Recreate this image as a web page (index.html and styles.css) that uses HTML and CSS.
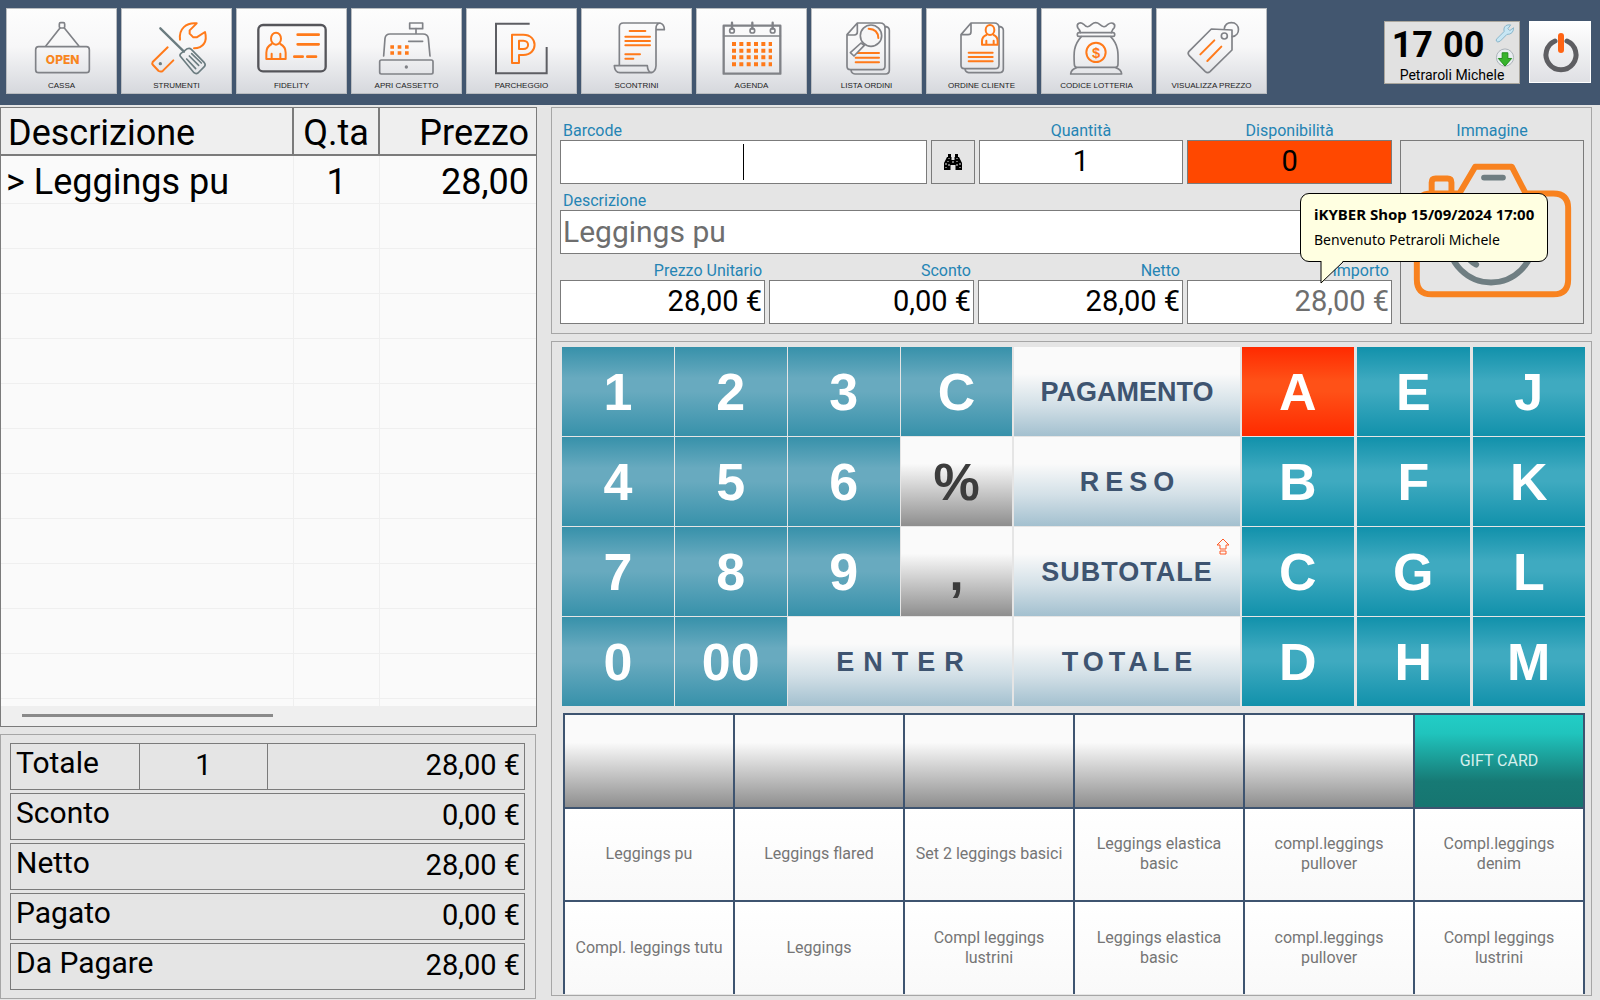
FILE: index.html
```html
<!DOCTYPE html>
<html lang="it">
<head>
<meta charset="utf-8">
<title>iKYBER Shop</title>
<meta name="viewport" content="width=device-width, initial-scale=1">
<link rel="stylesheet" href="styles.css">
</head>
<body>
<header class="topbar">
  <nav class="tools" aria-label="Funzioni">
    <button class="tool" type="button">
      <svg class="tool-icon" viewBox="18 24 333 216" aria-hidden="true">
        <g class="gray"><rect x="178" y="65" width="16" height="16" rx="4"/><path d="M180 81 138 134M193 81 236 134"/><rect x="107" y="137" width="161" height="78" rx="9"/></g>
        <text class="open-text" x="188" y="190">OPEN</text>
      </svg>
      <span>CASSA</span>
    </button>
    <button class="tool" type="button">
      <svg class="tool-icon" viewBox="363 24 333 216" aria-hidden="true">
        <g class="slate"><path class="thick" d="M481 82 552 152"/><path d="M541 166Q538 161 543 157L562 143Q569 140 574 145L613 185Q618 191 613 197L594 216Q588 220 582 215Z"/><path d="M560 174 587 203M568 165 596 193M575 158 604 186"/><circle class="slate-dot" cx="481" cy="188" r="5"/></g>
        <g class="orange"><path d="M540 116C536 84 558 64 590 67L569 88V98L580 109H590L615 93C623 121 610 142 582 142"/><path d="M503 139 458 183Q455 188 459 192L476 210Q483 214 489 209L520 178"/></g>
      </svg>
      <span>STRUMENTI</span>
    </button>
    <button class="tool" type="button">
      <svg class="tool-icon" viewBox="708 24 333 216" aria-hidden="true">
        <rect class="card" x="775" y="72" width="202" height="139" rx="14"/>
        <g class="orange heavy"><path d="M893 101H956M893 130H956M883 167H908M922 167H948"/></g>
        <g class="orange"><ellipse cx="828" cy="113" rx="15" ry="18"/><path d="M815 129Q799 137 799 155V174H857V155Q857 137 841 129M815 174V158M841 174V158"/></g>
      </svg>
      <span>FIDELITY</span>
    </button>
    <button class="tool" type="button">
      <svg class="tool-icon" viewBox="33 24 333 216" aria-hidden="true">
        <g class="gray"><rect x="209" y="66" width="39" height="17"/><path d="M228 83V98M131 165 135 112Q137 99 150 99H249Q263 99 265 112L270 165M206 121H248"/><rect x="119" y="177" width="160" height="42" rx="5"/><circle class="gray-dot" cx="199" cy="198" r="5"/></g>
        <path class="dots" d="M151 138H206M151 156H206"/>
      </svg>
      <span>APRI CASSETTO</span>
    </button>
    <button class="tool" type="button">
      <svg class="tool-icon" viewBox="378 24 333 216" aria-hidden="true">
        <path class="dark-line" d="M569 68H468V217H620V138"/>
        <g class="orange"><path d="M516 101H550C595 101 595 162 550 162H537V186H516ZM537 119V144H550C569 144 569 119 550 119Z"/></g>
      </svg>
      <span>PARCHEGGIO</span>
    </button>
    <button class="tool" type="button">
      <svg class="tool-icon" viewBox="723 24 333 216" aria-hidden="true">
        <g class="gray"><path d="M838 193V78Q838 66 850 66H960Q973 69 973 86H948M960 66Q948 68 948 82V194Q947 214 931 215H840Q824 214 823 194H922Q923 214 936 215"/></g>
        <g class="orange"><path d="M869 90H916M856 107H930M856 120H930M856 133H930M856 160H900M856 173H880"/></g>
      </svg>
      <span>SCONTRINI</span>
    </button>
    <button class="tool" type="button">
      <svg class="tool-icon" viewBox="48 24 333 216" aria-hidden="true">
        <g class="gray"><rect class="thick" x="131" y="74" width="170" height="144"/><path d="M131 105H301"/><circle cx="156" cy="89" r="7"/><circle cx="217" cy="89" r="7"/><circle cx="278" cy="89" r="7"/><path class="thick" d="M156 65V83M217 65V83M278 65V83"/></g>
        <path class="squares" d="M156 129H276M156 149H276M156 169H276M156 190H276"/>
      </svg>
      <span>AGENDA</span>
    </button>
    <button class="tool" type="button">
      <svg class="tool-icon" viewBox="393 24 333 216" aria-hidden="true">
        <g class="gray"><path d="M532 66H600Q615 66 615 80V195Q615 206 604 206H511Q501 206 501 196V101ZM532 66V93Q532 102 523 102H501M615 76Q628 78 628 88V208Q628 219 616 219H525Q514 218 513 207"/></g>
        <path class="orange" d="M527 156H597M527 170H597M527 184H597"/>
        <g class="gray lens"><path d="M543 126 511 155 522 165 553 133Z"/><circle cx="573" cy="104" r="32"/></g>
        <path class="orange" d="M566 83Q594 84 595 111"/>
      </svg>
      <span>LISTA ORDINI</span>
    </button>
    <button class="tool" type="button">
      <svg class="tool-icon" viewBox="738 24 333 216" aria-hidden="true">
        <g class="gray"><path d="M873 66H942Q957 66 957 80V191Q957 203 945 203H853Q843 203 843 193V101ZM873 66V92Q873 101 864 101H843M957 76Q970 78 970 88V204Q970 215 957 215H866Q856 214 855 204"/></g>
        <g class="orange"><path d="M866 155H938M866 168H938M866 181H938"/><ellipse cx="930" cy="87" rx="13" ry="15"/><path d="M919 102Q906 107 906 121V131H953V121Q953 107 941 102M919 131V119M941 131V119"/></g>
      </svg>
      <span>ORDINE CLIENTE</span>
    </button>
    <button class="tool" type="button">
      <svg class="tool-icon" viewBox="63 24 333 216" aria-hidden="true">
        <g class="gray"><path d="M181 95Q180 87 173 80C168 66 182 62 191 70C200 81 207 78 215 70Q227 60 239 70C248 78 255 81 264 70C274 62 288 67 283 80Q276 86 274 95"/><rect x="172" y="95" width="112" height="11" rx="5"/><path d="M184 107C160 133 161 157 163 190Q163 199 171 199H286Q294 199 294 190C295 156 296 132 272 107M170 200Q153 205 152 219H305Q304 205 287 200"/></g>
        <circle class="orange" cx="228" cy="154" r="29"/>
        <text class="dollar" x="228" y="170">$</text>
      </svg>
      <span>CODICE LOTTERIA</span>
    </button>
    <button class="tool" type="button">
      <svg class="tool-icon" viewBox="408 24 333 216" aria-hidden="true">
        <g class="gray"><path d="M574 84 636 87V147L570 212Q563 218 556 212L507 163Q502 157 507 151Z"/><circle cx="613" cy="105" r="9"/><path d="M613 83C615 70 625 65 634 65C662 65 662 104 637 107"/></g>
        <path class="orange" d="M541 160 583 118M562 180 604 137"/>
      </svg>
      <span>VISUALIZZA PREZZO</span>
    </button>
  </nav>
  <div class="status">
    <div class="clock">
      <time class="clock-time" datetime="17:00"><span>17</span><span>00</span></time>
      <div class="clock-icons">
        <svg width="20" height="22" viewBox="0 0 20 22" aria-hidden="true"><path class="wrench" d="M2 16 9 9Q8 3 13 2H16L13 6 15 8 19 5Q19 12 12 12L5 19Q2 21 1 19Q0 18 2 16Z"/></svg>
        <svg width="20" height="20" viewBox="0 0 20 20" aria-hidden="true"><circle class="globe" cx="10" cy="10" r="9"/><path class="down" d="M7 5H13V11H17L10 19 3 11H7Z"/></svg>
      </div>
      <div class="clock-user">Petraroli Michele</div>
    </div>
    <button class="power" type="button" aria-label="Esci">
      <svg width="60" height="60" viewBox="0 0 60 60" aria-hidden="true"><path class="power-ring" d="M25 19A15 15 0 1 0 37 19"/><path class="power-bar" d="M31 14V28"/></svg>
    </button>
  </div>
</header>

<main class="main">
  <div class="column">
    <section class="receipt">
      <div class="receipt-body">
        <table class="receipt-table">
          <thead><tr><th class="c-desc">Descrizione</th><th class="c-qty">Q.ta</th><th class="c-price">Prezzo</th></tr></thead>
          <tbody>
            <tr><td class="c-desc">&gt; Leggings pu</td><td class="c-qty">1</td><td class="c-price">28,00</td></tr>
            <tr><td></td><td></td><td></td></tr>
            <tr><td></td><td></td><td></td></tr>
            <tr><td></td><td></td><td></td></tr>
            <tr><td></td><td></td><td></td></tr>
            <tr><td></td><td></td><td></td></tr>
            <tr><td></td><td></td><td></td></tr>
            <tr><td></td><td></td><td></td></tr>
            <tr><td></td><td></td><td></td></tr>
            <tr><td></td><td></td><td></td></tr>
            <tr><td></td><td></td><td></td></tr>
            <tr><td></td><td></td><td></td></tr>
            <tr class="rest"><td></td><td></td><td></td></tr>
          </tbody>
        </table>
      </div>
      <div class="scroll"><div class="scroll-thumb"></div></div>
    </section>
    <dl class="totals">
      <div class="total with-count"><dt>Totale</dt><dd class="count">1</dd><dd>28,00 €</dd></div>
      <div class="total"><dt>Sconto</dt><dd>0,00 €</dd></div>
      <div class="total"><dt>Netto</dt><dd>28,00 €</dd></div>
      <div class="total"><dt>Pagato</dt><dd>0,00 €</dd></div>
      <div class="total"><dt>Da Pagare</dt><dd>28,00 €</dd></div>
    </dl>
  </div>

  <div class="column right">
    <form class="article">
      <div class="fields">
        <div class="row top-row">
          <div class="field"><label for="barcode">Barcode</label><input id="barcode" class="center caret" type="text"></div>
          <button class="search" type="button" aria-label="Cerca">
            <svg width="20" height="18" viewBox="0 0 20 18" aria-hidden="true"><path class="bino" d="M5 1H8V4H5ZM12 1H15V4H12ZM4 4H8.500V7H11.500V4H16L19 10V17H12.500V12H7.500V17H1V10Z"/><path class="bino-light" d="M3 10V12M3 14V15M5 8V9M6 11V13M14 11V13M17 10V12M17 14V15M14 8V9M10 8V10M6 5V6M14 5V6"/></svg>
          </button>
          <div class="field centered"><label for="qty">Quantità</label><input id="qty" class="center" type="text" value="1"></div>
          <div class="field centered"><label for="stock">Disponibilità</label><input id="stock" class="center alert" type="text" value="0"></div>
        </div>
        <div class="field"><label for="desc">Descrizione</label><input id="desc" class="muted name" type="text" value="Leggings pu"></div>
        <div class="row price-row">
          <div class="field end"><label for="unit">Prezzo Unitario</label><input id="unit" type="text" value="28,00 €"></div>
          <div class="field end"><label for="disc">Sconto</label><input id="disc" type="text" value="0,00 €"></div>
          <div class="field end"><label for="net">Netto</label><input id="net" type="text" value="28,00 €"></div>
          <div class="field end"><label for="amount">Importo</label><input id="amount" class="muted" type="text" value="28,00 €"></div>
        </div>
      </div>
      <figure class="picture">
        <figcaption>Immagine</figcaption>
        <div class="picture-frame">
          <svg width="184" height="182" viewBox="0 0 184 182" aria-hidden="true">
            <g class="camera"><path d="M126 52H154Q169 52 169 67V139Q169 154 154 154H31Q16 154 16 139V67Q16 52 31 52H59L75 25H112L126 52M31 51V41Q31 37 35 37H47Q51 37 51 41V51"/></g>
            <g class="camera-lens"><circle cx="91" cy="99" r="43"/><path d="M84 36H103M63 99Q63 117 76 124"/></g>
          </svg>
        </div>
      </figure>
      <div class="balloon" role="status">
        <strong>iKYBER Shop 15/09/2024 17:00</strong>
        <span>Benvenuto Petraroli Michele</span>
        <svg class="balloon-tail" width="26" height="25" viewBox="0 0 26 25" aria-hidden="true"><path class="tail-fill" d="M1 0V24L24 0Z"/><path class="tail-line" d="M1 1V23L24 1"/></svg>
      </div>
    </form>

    <section class="pad">
      <div class="keys">
        <div class="numbers">
          <button class="key" type="button">1</button><button class="key" type="button">2</button><button class="key" type="button">3</button><button class="key" type="button">C</button>
          <button class="key" type="button">4</button><button class="key" type="button">5</button><button class="key" type="button">6</button><button class="key silver" type="button">%</button>
          <button class="key" type="button">7</button><button class="key" type="button">8</button><button class="key" type="button">9</button><button class="key silver" type="button">,</button>
          <button class="key" type="button">0</button><button class="key" type="button">00</button><button class="action enter" type="button">ENTER</button>
        </div>
        <div class="actions">
          <button class="action" type="button">PAGAMENTO</button>
          <button class="action reso" type="button">RESO</button>
          <button class="action subtotal" type="button">SUBTOTALE
            <svg class="shift" width="14" height="17" viewBox="0 0 14 17" aria-hidden="true"><path d="M7 1 13 7H10V11H4V7H1ZM4 13H10V16H4Z"/></svg>
          </button>
          <button class="action total-key" type="button">TOTALE</button>
        </div>
        <div class="departments">
          <button class="key dept selected" type="button">A</button><button class="key dept" type="button">E</button><button class="key dept" type="button">J</button>
          <button class="key dept" type="button">B</button><button class="key dept" type="button">F</button><button class="key dept" type="button">K</button>
          <button class="key dept" type="button">C</button><button class="key dept" type="button">G</button><button class="key dept" type="button">L</button>
          <button class="key dept" type="button">D</button><button class="key dept" type="button">H</button><button class="key dept" type="button">M</button>
        </div>
      </div>
      <div class="shortcuts">
        <button class="shortcut blank" type="button" aria-label="Libero 1"></button>
        <button class="shortcut blank" type="button" aria-label="Libero 2"></button>
        <button class="shortcut blank" type="button" aria-label="Libero 3"></button>
        <button class="shortcut blank" type="button" aria-label="Libero 4"></button>
        <button class="shortcut blank" type="button" aria-label="Libero 5"></button>
        <button class="shortcut gift" type="button">GIFT CARD</button>
        <button class="shortcut" type="button">Leggings pu</button>
        <button class="shortcut" type="button">Leggings flared</button>
        <button class="shortcut" type="button">Set 2 leggings basici</button>
        <button class="shortcut" type="button">Leggings elastica<br>basic</button>
        <button class="shortcut" type="button">compl.leggings<br>pullover</button>
        <button class="shortcut" type="button">Compl.leggings<br>denim</button>
        <button class="shortcut" type="button">Compl. leggings tutu</button>
        <button class="shortcut" type="button">Leggings</button>
        <button class="shortcut" type="button">Compl leggings<br>lustrini</button>
        <button class="shortcut" type="button">Leggings elastica<br>basic</button>
        <button class="shortcut" type="button">compl.leggings<br>pullover</button>
        <button class="shortcut" type="button">Compl leggings<br>lustrini</button>
      </div>
    </section>
  </div>
</main>
</body>
</html>
```
FILE: styles.css
```css
:root {
  --navy: #42566f;
  --ink: #3e5470;
  --panel: #e5e5e5;
  --line: #a6a6a6;
  --dark-line: #7b7b7b;
  --label: #2484b4;
  --orange: #ff7a1a;
}

* { box-sizing: border-box; }

body {
  margin: 0;
  min-height: 100vh;
  display: flex;
  flex-direction: column;
  background: var(--panel);
  color: #000;
  font-family: Roboto, "Liberation Sans", sans-serif;
}

button, input { font: inherit; margin: 0; border-radius: 0; }
button { padding: 0; border: 0; cursor: pointer; }

/* Top bar */
.topbar {
  min-height: 105px;
  padding: 8px 9px 11px 6px;
  display: flex;
  justify-content: space-between;
  background: var(--navy);
}

.tools { display: flex; gap: 4px; }

.tool {
  width: 111px;
  height: 86px;
  display: flex;
  flex-direction: column;
  align-items: center;
  border: 1px solid #b9bcc0;
  background: linear-gradient(#fdfdfd 0%, #f7f7f8 45%, #d6d8dd 100%);
  font: 8px/10px "Liberation Sans", sans-serif;
  color: #222;
}

.tool-icon { width: 111px; height: 72px; flex: none; fill: none; stroke-width: 5; stroke-linecap: round; stroke-linejoin: round; }
.gray { stroke: #808287; }
.gray-dot { fill: #808287; stroke: none; }
.slate { stroke: #6b7c80; }
.slate-dot { fill: #6b7c80; stroke: none; }
.orange { stroke: var(--orange); stroke-width: 6; }
.heavy { stroke-width: 8; }
.thick { stroke-width: 7; }
.card { stroke: #55555a; stroke-width: 7; }
.dark-line { stroke: #5d5e63; stroke-width: 6; stroke-linecap: butt; stroke-linejoin: miter; }
.lens { fill: #f6f6f7; }
.dots { stroke: var(--orange); stroke-width: 11; stroke-linecap: butt; stroke-dasharray: 11 11; }
.squares { stroke: var(--orange); stroke-width: 12; stroke-linecap: butt; stroke-dasharray: 12 10; }
.open-text { font: 800 36px Inter, sans-serif; fill: #f8861e; text-anchor: middle; }
.dollar { font: 700 44px "Liberation Sans", sans-serif; fill: var(--orange); text-anchor: middle; }

.status { display: flex; align-items: flex-start; gap: 9px; padding-top: 13px; }

.clock {
  width: 136px;
  height: 63px;
  display: grid;
  grid-template: 45px 16px / minmax(0, 1fr) 28px;
  border: 1px solid #aaa69d;
  background: #e1e1e1;
}
.clock-time {
  display: flex;
  justify-content: center;
  gap: 10px;
  font: 700 36px/46px Roboto, sans-serif;
}
.clock-icons { display: flex; flex-direction: column; align-items: center; gap: 4px; padding-top: 1px; }
.clock-user { grid-column: 1 / -1; text-align: center; font-size: 14px; line-height: 16px; }
.wrench { fill: #c7e6f4; stroke: #86b3c8; }
.globe { fill: #e9edf1; stroke: #a9b0b6; }
.down { fill: #38b42c; stroke: #1f8a1a; }

.power {
  width: 62px;
  height: 62px;
  border: 1px solid #fff;
  background: linear-gradient(#fff, #dfe0e4);
}
.power svg { display: block; fill: none; stroke-linecap: round; }
.power-ring { stroke: #5e5e62; stroke-width: 5; }
.power-bar { stroke: #ff6414; stroke-width: 6; }

/* Main area */
.main {
  flex: 1;
  display: grid;
  grid-template-columns: minmax(0, 537fr) minmax(0, 1041fr);
  gap: 14px;
  padding: 2px 8px 2px 0;
}
.column { display: flex; flex-direction: column; gap: 7px; }
.right { padding-bottom: 3px; }

.receipt {
  flex: 1;
  display: flex;
  flex-direction: column;
  border: 1px solid var(--dark-line);
  background: #fafafa;
}
.receipt-body { flex: 1; display: grid; }
.receipt-table {
  width: 100%;
  border-collapse: separate;
  border-spacing: 0;
  table-layout: fixed;
  font-size: 36px;
  line-height: 40px;
}
.receipt-table th {
  height: 48px;
  padding: 4px 7px 0;
  font-weight: 400;
  background: #efefef;
  border-right: 2px solid var(--dark-line);
  border-bottom: 2px solid var(--dark-line);
}
.receipt-table th:last-child { border-right: 0; }
.receipt-table td {
  height: 45px;
  padding: 4px 7px 0;
  border-right: 1px solid #efefef;
  border-bottom: 1px solid #efefef;
}
.receipt-table td:last-child { border-right: 0; }
.receipt-table tbody tr:first-child td { height: 48px; }
.receipt-table .rest td { height: 7px; border-bottom: 0; }
.receipt-table .c-desc { width: 293px; text-align: left; }
.receipt-table td.c-desc { padding-left: 5px; }
.receipt-table .c-qty { width: 86px; padding-left: 0; padding-right: 0; text-align: center; }
.receipt-table .c-price { text-align: right; }

.scroll { height: 20px; padding: 8px 21px; background: #efefef; }
.scroll-thumb { width: 51%; height: 3px; background: #8a8a8a; }

.totals {
  margin: 0 1px 0 0;
  padding: 8px 10px 8px 9px;
  display: flex;
  flex-direction: column;
  gap: 3px;
  border: 1px solid var(--line);
  line-height: 34px;
}
.total {
  height: 47px;
  display: grid;
  grid-template-columns: 129px 1fr;
  border: 1px solid var(--dark-line);
  white-space: nowrap;
}
.with-count { grid-template-columns: 129px 128px 1fr; }
.total dt { padding: 2px 5px; font-size: 30px; }
.total dd { margin: 0; padding: 4px 4px 0; text-align: right; font-size: 29px; }
.with-count dt, .total .count { border-right: 1px solid var(--dark-line); }
.total .count { text-align: center; }

/* Article form */
.article {
  position: relative;
  display: grid;
  grid-template-columns: minmax(0, 1fr) 184px;
  gap: 8px;
  padding: 13px 7px 9px 8px;
  border: 1px solid var(--line);
}
.fields { display: flex; flex-direction: column; gap: 7px; }
.row { display: grid; gap: 4px; align-items: end; }
.top-row { grid-template-columns: minmax(0, 367fr) 44px minmax(0, 205fr) minmax(0, 205fr); }
.price-row { grid-template-columns: repeat(4, minmax(0, 1fr)); }
.field { display: flex; flex-direction: column; }
.field label, .picture figcaption { height: 19px; padding: 0 3px; font-size: 16px; line-height: 20px; color: var(--label); }
.field input {
  width: 100%;
  height: 44px;
  padding: 0 2px 2px;
  border: 1px solid var(--dark-line);
  background: #fff;
  font-size: 29px;
  color: #000;
}
.field .center { text-align: center; }
.field .muted { color: #6e6e6e; }
.field .name { font-size: 30px; }
.field .alert { background: #ff4800; }
.field .caret { background: linear-gradient(#000, #000) center / 1px 36px no-repeat #fff; }
.centered label { text-align: center; }
.end label, .end input { text-align: right; }
.search {
  height: 44px;
  display: grid;
  place-items: center;
  border: 1px solid var(--dark-line);
  background: var(--panel);
}
.bino { fill: #000; }
.bino-light { fill: none; stroke: #e5e5e5; }

.picture { margin: 0; display: flex; flex-direction: column; }
.picture figcaption { text-align: center; }
.picture-frame { flex: 1; border: 1px solid var(--dark-line); }
.picture-frame svg { display: block; width: 100%; fill: none; stroke-width: 6; stroke-linejoin: round; stroke-linecap: round; }
.camera { stroke: #f8821f; }
.camera-lens { stroke: #6f7e82; }

.balloon {
  position: absolute;
  top: 85px;
  right: 43px;
  width: 248px;
  height: 69px;
  padding: 8px 13px;
  border: 1px solid #000;
  border-radius: 9px;
  background: #ffffe1;
  font: 14px/25px "Noto Sans", "Open Sans", sans-serif;
  white-space: nowrap;
}
.balloon strong, .balloon span { display: block; }
.balloon strong { font-size: 15px; }
.balloon-tail { position: absolute; left: 19px; top: 66px; fill: none; }
.tail-fill { fill: #ffffe1; }
.tail-line { stroke: #000; }

/* Keypad */
.pad {
  flex: 1;
  display: flex;
  flex-direction: column;
  gap: 7px;
  padding: 5px 6px 1px 10px;
  border: 1px solid var(--line);
}
.keys { display: grid; grid-template-columns: minmax(0, 450fr) minmax(0, 225fr) minmax(0, 343fr); gap: 2px; }
.numbers, .actions, .departments { display: grid; grid-auto-rows: 89px; gap: 1px; }
.numbers { grid-template-columns: repeat(4, minmax(0, 1fr)); }
.departments { grid-template-columns: repeat(3, minmax(0, 1fr)); column-gap: 3px; }

.key {
  background: linear-gradient(#3791aa 0%, #68aabf 35%, #68aabf 50%, #3791aa 100%);
  color: #fff;
  font: 700 52px/60px "Liberation Sans", sans-serif;
}
.dept { background: linear-gradient(#1191ab 0%, #3faac0 38%, #3faac0 50%, #1191ab 100%); }
.selected { background: linear-gradient(#ff2a00 0%, #ff5117 38%, #ff5117 50%, #ff2a00 100%); }
.silver { background: linear-gradient(#fafafa 0%, #fafafa 30%, #8e8e8e 100%); color: #3c3c3c; }
.action {
  background: linear-gradient(#fafafa 0%, #fafafa 30%, #d3e0e7 65%, #a3c0cf 100%);
  color: var(--ink);
  font: 700 27px/32px "Liberation Sans", sans-serif;
}
.enter { grid-column: span 2; letter-spacing: 9px; text-indent: 9px; }
.reso { letter-spacing: 6px; text-indent: 6px; }
.subtotal { position: relative; letter-spacing: 1px; }
.total-key { letter-spacing: 5px; text-indent: 5px; }
.shift { position: absolute; top: 11px; right: 10px; fill: none; stroke: #ff5a26; }

/* Article shortcuts */
.shortcuts {
  flex: 1;
  display: grid;
  grid-template-columns: repeat(6, minmax(0, 1fr));
  grid-auto-rows: minmax(91px, 1fr);
  gap: 2px;
  margin-left: 1px;
  padding: 2px 2px 0;
  background: var(--ink);
}
.shortcut {
  background: linear-gradient(#fff, #f9f9f9);
  color: #757575;
  font-size: 16px;
  line-height: 20px;
}
.blank { background: linear-gradient(#fafafa 0%, #fafafa 30%, #8e8e8e 100%); }
.gift { background: linear-gradient(#22cdc6 0%, #20c4bd 20%, #177a75 72%, #167570 100%); color: #d6efed; }
```
